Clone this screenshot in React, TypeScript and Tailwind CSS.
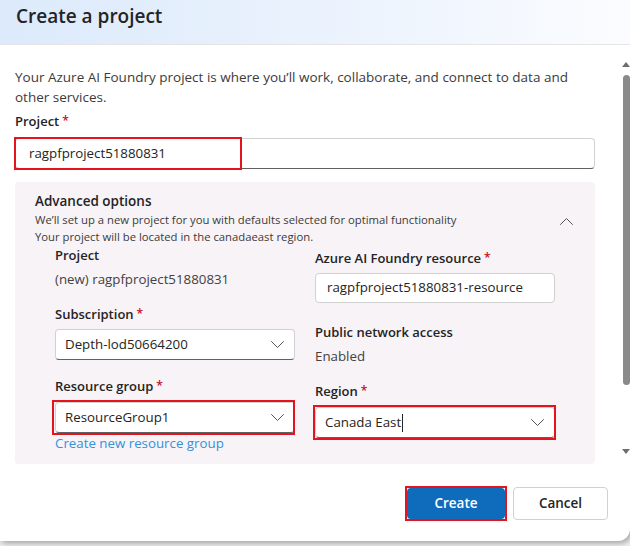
import React from 'react';

const font = { fontFamily: '"Open Sans", "Noto Sans", Arial, sans-serif' };

const Req: React.FC = () => <span className="relative -top-[1px] ml-[3px] text-[12px] text-[#c50f1f]">*</span>;

const Chevron: React.FC<{ up?: boolean }> = ({ up }) => (
  <svg width="13" height="7" viewBox="0 0 13 7" fill="none" stroke="#555" strokeWidth="1" strokeLinecap="round" strokeLinejoin="round">
    {up ? <path d="M0.5 6.5 L6.5 0.5 L12.5 6.5" /> : <path d="M0.5 0.5 L6.5 6.5 L12.5 0.5" />}
  </svg>
);

const Label: React.FC<{ children: React.ReactNode; req?: boolean }> = ({ children, req }) => (
  <div className="text-[13px] leading-[18px] font-semibold text-[#242424]">
    {children}
    {req && <Req />}
  </div>
);

const Select: React.FC<{ value: string; cursor?: boolean }> = ({ value, cursor }) => (
  <div className="flex h-[31px] items-center justify-between rounded-[4px] border border-[#d1d1d1] border-b-[#616161] bg-white pl-[9px] pr-[10px] text-[13.3px] text-[#242424]">
    <span className="flex items-center">
      {value}
      {cursor && <span className="ml-[1px] inline-block h-[18px] w-px bg-[#242424]" />}
    </span>
    <Chevron />
  </div>
);

const Highlight: React.FC<{ className: string }> = ({ className }) => (
  <div className={`pointer-events-none absolute border-2 border-[#e3141e] ${className}`} />
);

export default function App() {
  return (
    <div className="relative h-[546px] w-[630px] overflow-hidden bg-[#f1edf0] text-[#242424]" style={font}>
      <div className="flex h-[541px] flex-col rounded-br-[12px] bg-white shadow-[2px_2px_6px_rgba(0,0,0,0.35)]">
        {/* header */}
        <div className="flex h-[45px] shrink-0 items-center border-b border-[#e6e6e6] bg-gradient-to-r from-[#dceafb] via-[#eaf2fd] to-[#fbfcff] pb-[12px] pl-[16px] text-[19px] font-semibold text-[#242424]">
          Create a project
        </div>

        {/* scroll area */}
        <div className="flex h-[420px] shrink-0">
          <div className="flex-1 pl-[15px] pr-[27px] pt-[22px]">
            <p className="text-[13.5px] leading-[20px] text-[#3b3b3b]">
              Your Azure AI Foundry project is where you’ll work, collaborate, and connect to data and other services.
            </p>
            <div className="mt-[5px]">
              <Label req>Project</Label>
            </div>
            <div className="relative mt-[7px] flex h-[31px] items-center rounded-[4px] border border-[#d1d1d1] border-b-[#616161] bg-white pl-[13px] text-[13.3px]">
              ragpfproject51880831
              <Highlight className="-left-[2px] -top-[2px] h-[33px] w-[228px]" />
            </div>

            {/* advanced options */}
            <div className="mt-[13px] h-[282px] rounded-[4px] bg-[#f7f3f6] pl-[20px] pr-[20px] pt-[9px]">
              <div className="flex items-start justify-between">
                <div>
                  <div className="text-[13.5px] font-semibold leading-[20px]">Advanced options</div>
                  <div className="text-[11.3px] leading-[17px] text-[#3b3b3b]">
                    We’ll set up a new project for you with defaults selected for optimal functionality
                  </div>
                  <div className="text-[11.3px] leading-[17px] text-[#3b3b3b]">
                    Your project will be located in the canadaeast region.
                  </div>
                </div>
                <div className="mr-[2px] mt-[27px]">
                  <Chevron up />
                </div>
              </div>

              <div className="mt-[1px] grid grid-cols-[240px_240px] gap-x-[20px] pl-[20px]">
                <div className="flex flex-col">
                  <Label>Project</Label>
                  <div className="mt-[6px] text-[13.3px] leading-[18px] text-[#424242]">(new) ragpfproject51880831</div>
                  <div className="mt-[17px]">
                    <Label req>Subscription</Label>
                  </div>
                  <div className="mt-[5px]">
                    <Select value="Depth-lod50664200" />
                  </div>
                  <div className="mt-[17px]">
                    <Label req>Resource group</Label>
                  </div>
                  <div className="relative mt-[6px]">
                    <Select value="ResourceGroup1" />
                    <Highlight className="-left-[3px] -top-[2px] h-[35px] w-[243px]" />
                  </div>
                  <div className="mt-[2px] text-[13.3px] leading-[16px] text-[#3391dd]">Create new resource group</div>
                </div>

                <div className="flex flex-col pt-[3px]">
                  <Label req>Azure AI Foundry resource</Label>
                  <div className="mt-[5px] flex h-[30px] items-center rounded-[4px] border border-[#d1d1d1] bg-white pl-[11px] text-[13.3px]">
                    ragpfproject51880831-resource
                  </div>
                  <div className="mt-[20px]">
                    <Label>Public network access</Label>
                  </div>
                  <div className="mt-[6px] text-[13.3px] leading-[18px] text-[#424242]">Enabled</div>
                  <div className="mt-[17px]">
                    <Label req>Region</Label>
                  </div>
                  <div className="relative mt-[6px]">
                    <Select value="Canada East" cursor />
                    <Highlight className="-left-[2px] -top-[2px] h-[35px] w-[243px]" />
                  </div>
                </div>
              </div>
            </div>
          </div>

          {/* scrollbar */}
          <div className="flex w-[8px] flex-col items-center pt-[17px]">
            <div className="h-0 w-0 border-x-[4px] border-b-[5px] border-x-transparent border-b-[#6e6e6e]" />
            <div className="mt-[8px] h-[310px] w-[7px] rounded-full bg-[#8a8a8a]" />
            <div className="mt-[64px] h-0 w-0 border-x-[4px] border-t-[5px] border-x-transparent border-t-[#6e6e6e]" />
          </div>
        </div>

        {/* footer */}
        <div className="flex justify-end gap-[8px] pr-[22px] pt-[23px]">
          <div className="relative">
            <button className="flex h-[31px] w-[98px] items-center justify-center rounded-[4px] bg-[#0f6cbd] text-[13.5px] font-semibold text-white">
              Create
            </button>
            <Highlight className="-left-[2px] -top-[2px] h-[35px] w-[102px]" />
          </div>
          <button className="-mt-[1px] flex h-[33px] w-[95px] items-center justify-center rounded-[4px] border border-[#d1d1d1] bg-white text-[13.5px] font-semibold text-[#242424]">
            Cancel
          </button>
        </div>
      </div>
    </div>
  );
}
